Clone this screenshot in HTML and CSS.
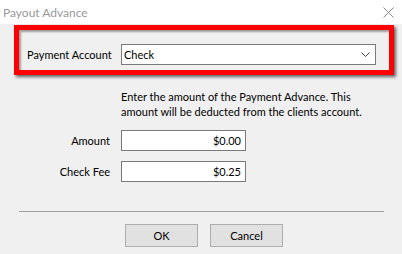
FILE: index.html
```html
<!DOCTYPE html>
<html lang="en">
<head>
  <meta charset="UTF-8" />
  <title>Payout Advance</title>
  <link rel="stylesheet" href="styles.css">
</head>
<body>

  <!-- TITLE BAR -->
  <div class="titlebar">
    <span class="titulo">Payout Advance</span>
    <svg class="cerrar" width="11" height="11" viewBox="0 0 11 11">
      <path d="M0.5 0.5 L10.5 10.5 M10.5 0.5 L0.5 10.5" stroke="#8c8c8c" stroke-width="1" fill="none"/>
    </svg>
  </div>

  <!-- CUENTA (marcada en rojo) -->
  <div class="marco">
    <div class="fila-cuenta">
      <span class="etiqueta-cuenta">Payment Account</span>
      <div class="combo">
        <span>Check</span>
        <svg width="9" height="5" viewBox="0 0 9 5">
          <path d="M0.5 0.5 L4.5 4.5 L8.5 0.5" stroke="#444" stroke-width="1" fill="none"/>
        </svg>
      </div>
    </div>
  </div>

  <p class="descripcion">Enter the amount of the Payment Advance. This<br>amount will be deducted from the clients account.</p>

  <div class="formulario">
    <label>Amount</label>
    <div class="campo">$0.00</div>
    <label>Check Fee</label>
    <div class="campo">$0.25</div>
  </div>

  <div class="separador"></div>

  <div class="botones">
    <button>OK</button>
    <button>Cancel</button>
  </div>

</body>
</html>
```

FILE: styles.css
```css
body {
  margin: 0;
  font-family: 'Lato', sans-serif;
  font-size: 11px;
  background-color: #f0f0f0;
  color: #000;
}

.titlebar {
  height: 24px;
  background-color: #fff;
  display: flex;
  align-items: center;
  justify-content: space-between;
  padding: 0 8px 0 3px;
  font-size: 12px;
}

.titulo {
  color: #999;
}

.cerrar {
  display: block;
}

.marco {
  margin: 1px 8px 0 14px;
  height: 40px;
  border: 5px solid #f00;
  box-shadow: 2px 2px 3px rgba(0, 0, 0, 0.6), inset 2px 2px 2px rgba(0, 0, 0, 0.35);
}

.fila-cuenta {
  display: flex;
  align-items: center;
  padding: 14px 13px 0 8px;
}

.etiqueta-cuenta {
  flex: none;
  width: 94px;
  white-space: nowrap;
}

.combo {
  flex: 1;
  height: 19px;
  background-color: #fff;
  border: 1px solid #7a7a7a;
  display: flex;
  align-items: center;
  justify-content: space-between;
  padding: 0 5px 0 2px;
}

.descripcion {
  margin: 14px 0 0 121px;
  line-height: 15px;
  white-space: nowrap;
}

.formulario {
  display: grid;
  grid-template-columns: 102px 125px;
  column-gap: 11px;
  row-gap: 10px;
  align-items: center;
  margin: 11px 0 0 8px;
}

.formulario label {
  text-align: right;
}

.campo {
  height: 19px;
  line-height: 19px;
  background-color: #fff;
  border: 1px solid #7a7a7a;
  text-align: right;
  padding-right: 4px;
}

.separador {
  height: 1px;
  background-color: #a0a0a0;
  margin: 29px 18px 0 19px;
}

.botones {
  display: flex;
  gap: 12px;
  margin: 12px 0 0 125px;
}

.botones button {
  width: 73px;
  height: 23px;
  background-color: #e1e1e1;
  border: 1px solid #adadad;
  font-family: 'Lato', sans-serif;
  font-size: 11px;
  color: #000;
}
```
